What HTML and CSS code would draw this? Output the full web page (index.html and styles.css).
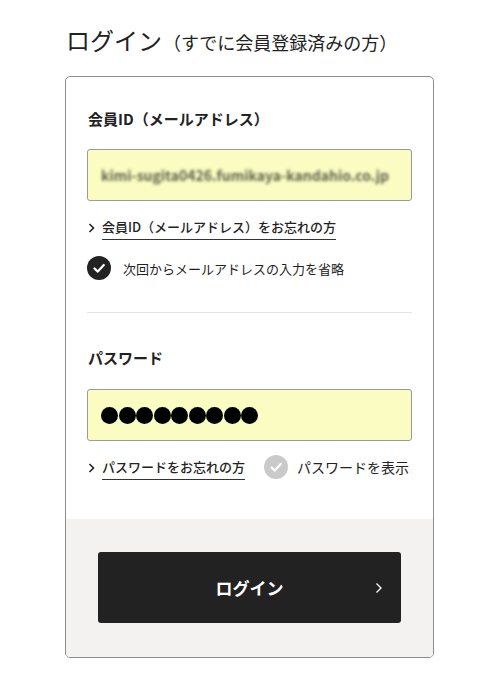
FILE: index.html
```html
<!DOCTYPE html>
<html lang="ja">
<head>
    <meta charset="UTF-8">
    <meta name="viewport" content="width=device-width, initial-scale=1.0">
    <title>ログイン</title>
    <link rel="stylesheet" href="styles.css">
</head>
<body>
<div class="page">
    <h1 class="title">ログイン<span class="sub">（すでに会員登録済みの方）</span></h1>

    <div class="card">
        <div class="card-body">
            <div class="field">
                <div class="label">会員ID（メールアドレス）</div>
                <div class="input">
                    <span class="blurred">kimi-sugita0426.fumikaya-kandahio.co.jp</span>
                </div>
                <a class="link" href="#">
                    <svg class="chev" width="7" height="10" viewBox="0 0 7 10"><path d="M1.5 1 L5.5 5 L1.5 9" fill="none" stroke="#222" stroke-width="1.6"/></svg>
                    <span class="link-text">会員ID（メールアドレス）をお忘れの方</span>
                </a>
                <div class="check-row">
                    <span class="check on">
                        <svg width="24" height="24" viewBox="0 0 24 24"><path d="M7.5 12.5 L10.8 15.6 L16.8 9" fill="none" stroke="#fff" stroke-width="2.2" stroke-linecap="round" stroke-linejoin="round"/></svg>
                    </span>
                    <span class="check-text">次回からメールアドレスの入力を省略</span>
                </div>
            </div>

            <div class="divider"></div>

            <div class="field field-pass">
                <div class="label">パスワード</div>
                <div class="input">
                    <span class="dot"></span><span class="dot"></span><span class="dot"></span>
                    <span class="dot"></span><span class="dot"></span><span class="dot"></span>
                    <span class="dot"></span><span class="dot"></span><span class="dot"></span>
                </div>
                <div class="pass-row">
                    <a class="link" href="#">
                        <svg class="chev" width="7" height="10" viewBox="0 0 7 10"><path d="M1.5 1 L5.5 5 L1.5 9" fill="none" stroke="#222" stroke-width="1.6"/></svg>
                        <span class="link-text">パスワードをお忘れの方</span>
                    </a>
                    <div class="check-row show">
                        <span class="check off">
                            <svg width="24" height="24" viewBox="0 0 24 24"><path d="M7.5 12.5 L10.8 15.6 L16.8 9" fill="none" stroke="#fff" stroke-width="2.2" stroke-linecap="round" stroke-linejoin="round"/></svg>
                        </span>
                        <span class="show-text">パスワードを表示</span>
                    </div>
                </div>
            </div>
        </div>

        <div class="card-foot">
            <button class="btn">
                <span>ログイン</span>
                <svg class="btn-chev" width="8" height="12" viewBox="0 0 8 12"><path d="M1.5 1.5 L6 6 L1.5 10.5" fill="none" stroke="#fff" stroke-width="1.3"/></svg>
            </button>
        </div>
    </div>
</div>
</body>
</html>
```

FILE: styles.css
```css
body {
    margin: 0;
    background-color: #fff;
    color: #222;
    font-family: "Noto Sans CJK JP", "Noto Sans", sans-serif;
}

.page {
    padding: 24px 66px 0 65px;
}

.title {
    margin: 0;
    font-size: 24px;
    line-height: 32px;
    font-weight: normal;
    color: #222;
    padding-left: 1px;
}

.title .sub {
    font-size: 18px;
    margin-left: 1px;
}

.card {
    margin-top: 18px;
    border: 1px solid #8c8c8c;
    border-radius: 5px;
    overflow: hidden;
}

.card-body {
    padding: 32px 21px 39px 21px;
}

.label {
    font-size: 15px;
    line-height: 20px;
    font-weight: bold;
    padding-left: 1px;
}

.input {
    margin-top: 20px;
    height: 50px;
    border: 1px solid #9a9a9a;
    border-radius: 3px;
    background-color: #fafcc2;
    display: flex;
    align-items: center;
    padding-left: 13px;
}

.blurred {
    font-size: 14px;
    font-weight: bold;
    color: #5e6248;
    filter: blur(1.4px);
}

.dot {
    width: 17px;
    height: 17px;
    border-radius: 50%;
    background-color: #000;
    margin-right: 0.5px;
}

.link {
    margin-top: 16px;
    display: inline-flex;
    align-items: center;
    color: #222;
    text-decoration: none;
}

.chev {
    margin-left: 1px;
    margin-right: 7px;
    margin-top: -2px;
}

.link-text {
    font-size: 13px;
    line-height: 20px;
    font-weight: 500;
    padding-bottom: 2px;
    border-bottom: 1.5px solid #333;
}

.check-row {
    display: flex;
    align-items: center;
    margin-top: 16px;
}

.check {
    width: 24px;
    height: 24px;
    border-radius: 50%;
    display: flex;
}

.check.on {
    background-color: #222;
}

.check.off {
    background-color: #cacaca;
}

.check-text {
    margin-left: 12px;
    font-size: 13px;
}

.divider {
    margin-top: 32px;
    height: 1px;
    background-color: #e4e4e4;
}

.field-pass {
    padding-top: 35px;
}

.field-pass .input {
    margin-top: 21px;
    padding-left: 13px;
}

.pass-row {
    display: flex;
    align-items: flex-start;
    margin-top: 14px;
}

.pass-row .link {
    margin-top: 2px;
}

.check-row.show {
    margin-top: 0;
    margin-left: 19px;
}

.show-text {
    margin-left: 9px;
    font-size: 14px;
}

.card-foot {
    background-color: #f3f2f0;
    padding: 33px 32px 34px 32px;
}

.btn {
    width: 100%;
    height: 71px;
    border: none;
    border-radius: 3px;
    background-color: #222;
    color: #fff;
    font-family: inherit;
    font-size: 17px;
    font-weight: bold;
    position: relative;
    display: flex;
    align-items: center;
    justify-content: center;
}

.btn-chev {
    position: absolute;
    right: 18px;
    top: 30px;
}
```
